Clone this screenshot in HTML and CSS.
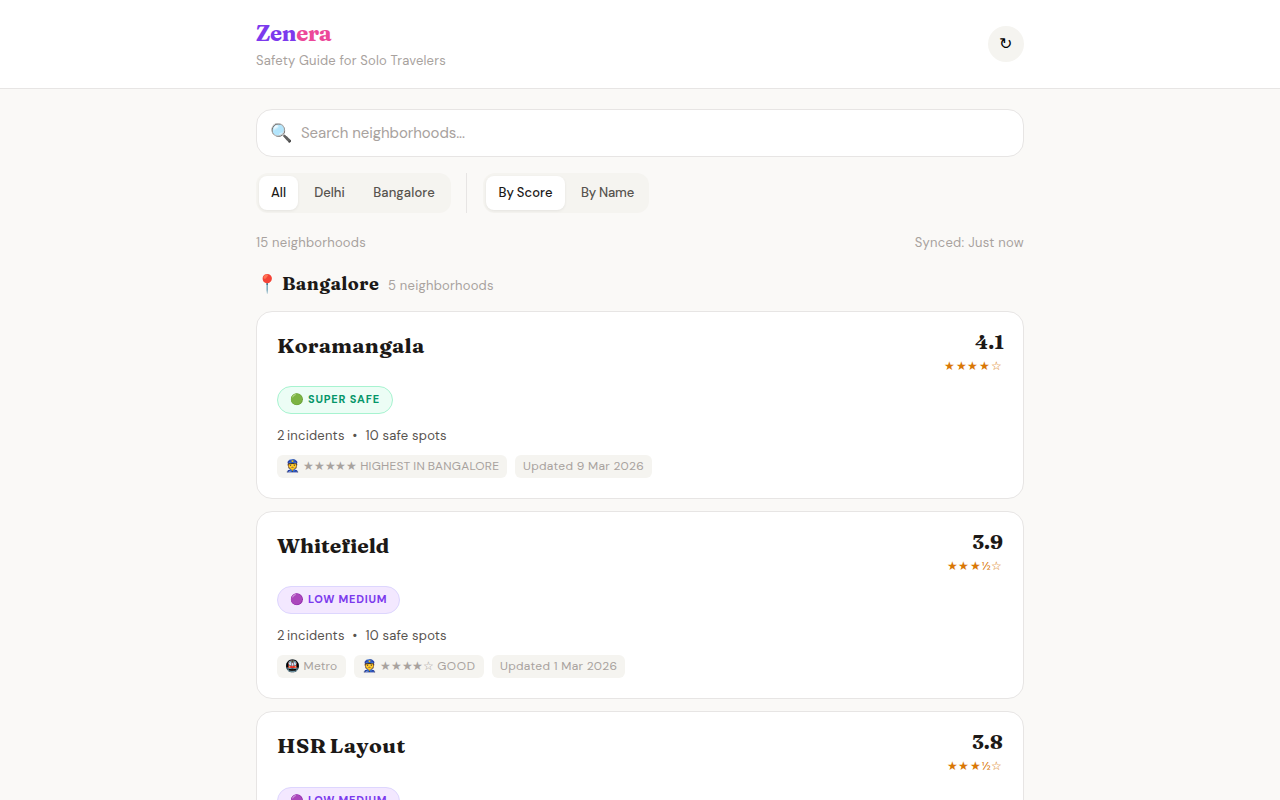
FILE: index.html
```html
<!DOCTYPE html>
<html lang="en">
<head>
<meta charset="utf-8">
<title>Zenera</title>
<link rel="stylesheet" href="styles.css">
</head>
<body>
<header class="header">
  <div class="wrap header-row">
    <div>
      <h1 class="logo"><span class="logo-a">Zen</span><span class="logo-b">era</span></h1>
      <p class="tagline">Safety Guide for Solo Travelers</p>
    </div>
    <button class="refresh">↻</button>
  </div>
</header>
<main class="wrap main">
  <div class="search"><span class="search-icon">🔍</span><span class="search-text">Search neighborhoods...</span></div>
  <div class="filters">
    <div class="group cities">
      <button class="seg seg-all active">All</button>
      <button class="seg seg-delhi">Delhi</button>
      <button class="seg seg-blr">Bangalore</button>
    </div>
    <div class="divider"></div>
    <div class="group sorts">
      <button class="seg seg-score active">By Score</button>
      <button class="seg seg-name">By Name</button>
    </div>
  </div>
  <div class="status"><span>15 neighborhoods</span><span class="sync">Synced: Just now</span></div>
  <div class="city"><span class="pin">📍</span><h2 class="city-name">Bangalore</h2><span class="city-count">5 neighborhoods</span></div>
  <div class="cards">
    <article class="card">
      <div class="card-top">
        <h3 class="name n1">Koramangala</h3>
        <div class="rating"><div class="score narrow">4.1</div><div class="stars full">★★★★☆</div></div>
      </div>
      <div class="badge safe"><span class="dot">🟢</span><span>SUPER SAFE</span></div>
      <div class="facts"><span class="incidents">2 incidents</span><span>•</span><span>10 safe spots</span></div>
      <div class="tags"><span class="tag w230">👮 <span class="police">★★★★★</span> <span class="level">HIGHEST IN BANGALORE</span></span><span class="tag date w137">Updated 9 Mar 2026</span></div>
    </article>
    <article class="card">
      <div class="card-top">
        <h3 class="name n2">Whitefield</h3>
        <div class="rating"><div class="score">3.9</div><div class="stars">★★★½☆</div></div>
      </div>
      <div class="badge medium"><span class="dot">🟣</span><span>LOW MEDIUM</span></div>
      <div class="facts"><span class="incidents">2 incidents</span><span>•</span><span>10 safe spots</span></div>
      <div class="tags"><span class="tag w69">🚇 Metro</span><span class="tag w130">👮 <span class="police">★★★★☆</span> <span class="good">GOOD</span></span><span class="tag date w133">Updated 1 Mar 2026</span></div>
    </article>
    <article class="card">
      <div class="card-top tall">
        <h3 class="name n3">HSR Layout</h3>
        <div class="rating"><div class="score">3.8</div><div class="stars">★★★½☆</div></div>
      </div>
      <div class="badge medium"><span class="dot">🟣</span><span>LOW MEDIUM</span></div>
    </article>
  </div>
</main>
</body>
</html>
```
FILE: styles.css
```css
* { box-sizing: border-box; margin: 0; padding: 0; }
body { height: 800px; overflow: hidden; background: #faf9f7; color: #1c1917; font-family: "DM Sans", sans-serif; }
button { border: 0; font-family: inherit; }
.wrap { width: 768px; margin: 0 auto; }
.header { height: 89px; background: #fff; border-bottom: 1px solid #e7e5e4; }
.header-row { height: 88px; display: flex; align-items: center; justify-content: space-between; }
.logo { font: 700 22px/30px Fraunces, "DejaVu Serif", serif; letter-spacing: -0.3px; }
.logo-a { color: #7c3aed; }
.logo-b { color: #ec4899; }
.tagline { font-size: 13px; line-height: 20px; padding-top: 3px; margin-bottom: -1px; letter-spacing: .18px; color: #a8a29e; }
.refresh { width: 36px; height: 36px; padding: 0 1px 2px 0; border-radius: 50%; background: #f5f4f0; font-size: 16px; color: #000; }
.main { padding-top: 20px; }
.search { height: 48px; display: flex; align-items: center; background: #fff; border: 1px solid #e7e5e4; border-radius: 16px; padding-left: 13px; }
.search-icon { width: 31px; font-size: 18px; white-space: nowrap; }
.search-text { font-size: 15px; letter-spacing: -.08px; color: #a8a29e; }
.filters { display: flex; height: 40px; margin-top: 16px; }
.group { display: flex; gap: 4px; padding: 3px; height: 40px; background: #f5f4f0; border-radius: 12px; }
.cities { width: 195px; }
.sorts { width: 166px; }
.divider { width: 1px; background: #e7e5e4; margin: 0 16px 0 15px; }
.seg { height: 34px; padding: 0 0 2px; border-radius: 8px; background: transparent; font-size: 13px; font-weight: 500; color: #57534e; white-space: nowrap; }
.active { background: #fff; color: #1c1917; box-shadow: 0 1px 3px rgba(0,0,0,.07); }
.seg-all { width: 39px; }
.seg-delhi { width: 55px; }
.seg-blr { width: 86px; letter-spacing: .1px; }
.seg-score { width: 79px; letter-spacing: .1px; word-spacing: -.7px; }
.seg-name { width: 77px; letter-spacing: -.2px; }
.status { display: flex; justify-content: space-between; margin-top: 20px; font-size: 13px; line-height: 20px; letter-spacing: .22px; color: #a8a29e; }
.sync { letter-spacing: .28px; }
.city { display: flex; height: 30px; margin: 16px 0 12px; align-items: center; }
.pin { width: 26px; font-size: 18px; white-space: nowrap; }
.city-name { width: 106px; font: 700 18px/30px Fraunces, "DejaVu Serif", serif; letter-spacing: .45px; white-space: nowrap; }
.city-count { font-size: 13px; line-height: 20px; letter-spacing: .23px; color: #a8a29e; padding-top: 3px; }
.cards { display: grid; gap: 12px; }
.card { height: 188px; padding: 20px; background: #fff; border: 1px solid #e7e5e4; border-radius: 16px; }
.card-top { height: 54px; display: flex; justify-content: space-between; }
.tall { height: 55px; }
.name { font: 700 21px/26px Fraunces, "DejaVu Serif", serif; white-space: nowrap; }
.n1 { letter-spacing: .3px; }
.n2 { letter-spacing: 0; }
.n3 { letter-spacing: .45px; word-spacing: -2px; }
.rating { text-align: right; }
.score { font: 700 20px/20px Fraunces, "DejaVu Serif", serif; }
.narrow { margin-right: -1px; }
.stars { font-size: 12px; line-height: 16px; margin-top: 6px; letter-spacing: .7px; color: #d97706; }
.full { letter-spacing: .85px; }
.badge { display: flex; align-items: center; width: 116px; height: 28px; border: 1px solid; border-radius: 14px; padding: 0 0 2px 12px; font-size: 11px; font-weight: 700; letter-spacing: .8px; white-space: nowrap; }
.dot { width: 18px; }
.safe { background: #ecfdf5; color: #059669; border-color: #a7f3d0; }
.medium { width: 123px; background: #f3e8ff; color: #7c3aed; border-color: #ddd6fe; letter-spacing: .75px; }
.facts { display: flex; gap: 8px; margin-top: 12px; font-size: 13px; line-height: 20px; letter-spacing: .2px; color: #57534e; }
.incidents { word-spacing: -1.3px; }
.tags { display: flex; gap: 8px; margin-top: 9px; }
.tag { height: 23px; padding-left: 8px; font-size: 12px; line-height: 22px; background: #f5f4f0; color: #a8a29e; border-radius: 6px; white-space: nowrap; }
.police { letter-spacing: -.25px; }
.level { letter-spacing: .28px; word-spacing: -.8px; }
.good { letter-spacing: .6px; }
.date { letter-spacing: .3px; }
.w230 { width: 230px; }
.w137 { width: 137px; }
.w69 { width: 69px; letter-spacing: .2px; }
.w130 { width: 130px; }
.w133 { width: 133px; }
```
